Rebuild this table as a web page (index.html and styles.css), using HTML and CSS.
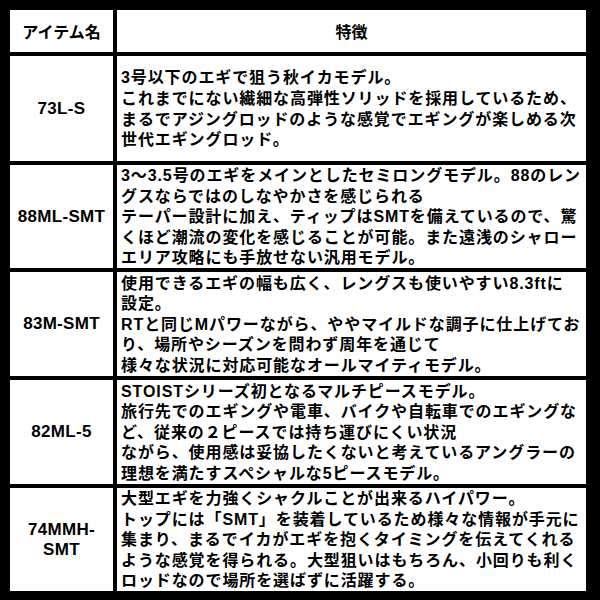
FILE: index.html
```html
<!DOCTYPE html>
<html lang="ja">
<head>
<meta charset="utf-8">
<link rel="stylesheet" href="styles.css">
</head>
<body>
<div class="table">
  <div class="cell head">アイテム名</div>
  <div class="cell head">特徴</div>

  <div class="cell name">73L-S</div>
  <div class="cell desc"><p>3号以下のエギで狙う秋イカモデル。<br>これまでにない繊細な高弾性ソリッドを採用しているため、<br>まるでアジングロッドのような感覚でエギングが楽しめる次<br>世代エギングロッド。</p></div>

  <div class="cell name">88ML-SMT</div>
  <div class="cell desc"><p>3〜3.5号のエギをメインとしたセミロングモデル。88のレン<br>グスならではのしなやかさを感じられる<br>テーパー設計に加え、ティップはSMTを備えているので、驚<br>くほど潮流の変化を感じることが可能。また遠浅のシャロー<br>エリア攻略にも手放せない汎用モデル。</p></div>

  <div class="cell name">83M-SMT</div>
  <div class="cell desc"><p>使用できるエギの幅も広く、レングスも使いやすい8.3ftに<br>設定。<br>RTと同じMパワーながら、ややマイルドな調子に仕上げてお<br>り、場所やシーズンを問わず周年を通じて<br>様々な状況に対応可能なオールマイティモデル。</p></div>

  <div class="cell name">82ML-5</div>
  <div class="cell desc"><p>STOISTシリーズ初となるマルチピースモデル。<br>旅行先でのエギングや電車、バイクや自転車でのエギングな<br>ど、従来の２ピースでは持ち運びにくい状況<br>ながら、使用感は妥協したくないと考えているアングラーの<br>理想を満たすスペシャルな5ピースモデル。</p></div>

  <div class="cell name">74MMH-<br>SMT</div>
  <div class="cell desc"><p>大型エギを力強くシャクルことが出来るハイパワー。<br>トップには「SMT」を装着しているため様々な情報が手元に<br>集まり、まるでイカがエギを抱くタイミングを伝えてくれる<br>ような感覚を得られる。大型狙いはもちろん、小回りも利く<br>ロッドなので場所を選ばずに活躍する。</p></div>
</div>
</body>
</html>
```
FILE: styles.css
```css
html, body {
  margin: 0;
  padding: 0;
  background: #000;
}
body {
  width: 600px;
  height: 600px;
  overflow: hidden;
  font-family: "Liberation Sans", "Noto Sans CJK JP", sans-serif;
  color: #000;
}
.table {
  display: grid;
  grid-template-columns: 103px 469px;
  grid-template-rows: 42px 105px 103px 104px 104px 103px;
  gap: 4px;
  padding: 10px 0 0 10px;
}
.cell {
  background: #fff;
  display: flex;
  align-items: center;
}
.head {
  justify-content: center;
  font-weight: 700;
  font-size: 16px;
  letter-spacing: 0;
}
.name {
  justify-content: center;
  text-align: center;
  font-weight: 700;
  font-size: 17px;
  line-height: 20px;
  letter-spacing: 0.3px;
}
.desc {
  padding: 2px 0 0 4px;
}
.desc p {
  margin: 0;
  font-size: 16px;
  font-weight: 700;
  line-height: 20.6px;
  letter-spacing: 0.9px;
  white-space: nowrap;
}
```
